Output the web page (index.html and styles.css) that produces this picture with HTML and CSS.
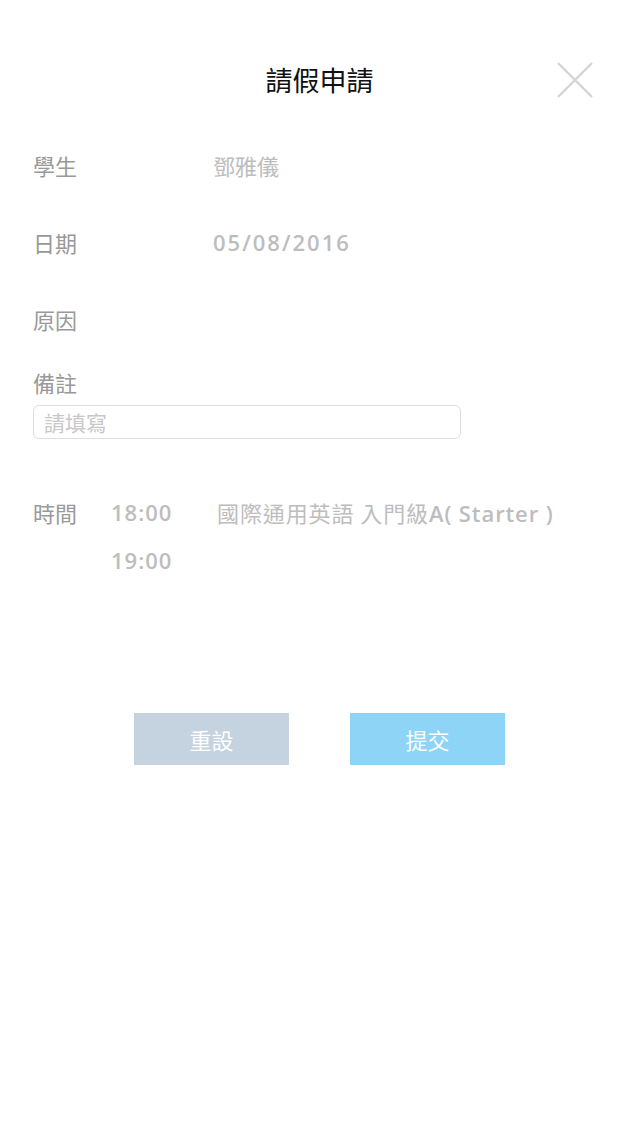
FILE: index.html
```html
<!DOCTYPE html>
<html lang="zh-Hant">
<head>
<meta charset="utf-8">
<title>請假申請</title>
<link rel="stylesheet" href="styles.css">
</head>
<body>
<div class="page">
  <header class="header">
    <span></span>
    <h1 class="title">請假申請</h1>
    <button class="close" aria-label="關閉">
      <svg width="36" height="36" viewBox="0 0 36 36"><path d="M1 1 L35 35 M35 1 L1 35" stroke="#d3d3d3" stroke-width="2.2" fill="none"/></svg>
    </button>
  </header>

  <div class="row"><span class="label">學生</span><span class="value">鄧雅儀</span></div>
  <div class="row"><span class="label">日期</span><span class="value lat num">05/08/2016</span></div>
  <div class="row"><span class="label">原因</span><span class="value"></span></div>

  <div class="note">
    <div class="label note-label">備註</div>
    <div class="input"><span class="placeholder">請填寫</span></div>
  </div>

  <div class="time">
    <span class="label">時間</span>
    <div class="slots">
      <div class="slot"><span class="value lat t">18:00</span><span class="value course">國際通用英語 入門級<span class="lat">A( Starter )</span></span></div>
      <div class="slot"><span class="value lat t">19:00</span></div>
    </div>
  </div>

  <div class="actions">
    <button class="btn reset">重設</button>
    <button class="btn submit">提交</button>
  </div>
</div>
</body>
</html>
```

FILE: styles.css
```css
* { box-sizing: border-box; }
html, body { margin: 0; padding: 0; background: #fff; }
body {
  font-family: "Open Sans", "Noto Sans CJK TC", sans-serif;
  width: 639px;
  height: 1136px;
}
.page { padding: 0 33px; }

.header {
  display: grid;
  grid-template-columns: 1fr auto 1fr;
  align-items: center;
  height: 126px;
  padding-bottom: 26px;
}
.title {
  margin: 0;
  font-family: "Noto Sans CJK TC", sans-serif;
  font-weight: 400;
  font-size: 27px;
  line-height: 40px;
  color: #111;
  padding-top: 60px;
}
.close {
  justify-self: end;
  margin-right: 13px;
  margin-top: 60px;
  padding: 0;
  border: 0;
  background: none;
  width: 36px;
  height: 36px;
  display: flex;
}

.label {
  font-family: "Noto Sans CJK TC", sans-serif;
  font-size: 22px;
  font-weight: 400;
  color: #999;
}
.value {
  font-family: "Noto Sans CJK TC", sans-serif;
  font-size: 22px;
  font-weight: 400;
  color: #bdbdbd;
}
.lat {
  font-family: "Open Sans", "Noto Sans CJK TC", sans-serif;
  font-weight: 600;
}
.num { letter-spacing: 2px; }

.row {
  display: flex;
  height: 77px;
  align-items: center;
}
.row .label { width: 180px; }

.note { padding-top: 10px; }
.note-label { line-height: 30px; }
.input {
  margin-top: 8px;
  width: 428px;
  height: 34px;
  border: 1px solid #dedede;
  border-radius: 6px;
  padding-left: 10px;
  display: flex;
  align-items: center;
}
.placeholder {
  font-family: "Noto Sans CJK TC", sans-serif;
  font-size: 21px;
  color: #c8c8c8;
}

.time {
  display: flex;
  margin-top: 49px;
}
.time .label { width: 78px; line-height: 48px; }
.slot {
  display: flex;
  height: 48px;
  align-items: center;
}
.t { width: 106px; letter-spacing: 1px; }
.course { letter-spacing: 0.9px; }

.actions {
  display: flex;
  justify-content: center;
  gap: 61px;
  margin: 129px -33px 0;
}
.btn {
  width: 155px;
  height: 52px;
  border: 0;
  color: #fff;
  font-family: "Noto Sans CJK TC", sans-serif;
  font-size: 22px;
  padding: 0;
}
.reset { background: #c5d3e0; }
.submit { background: #8ed4f6; }
```
